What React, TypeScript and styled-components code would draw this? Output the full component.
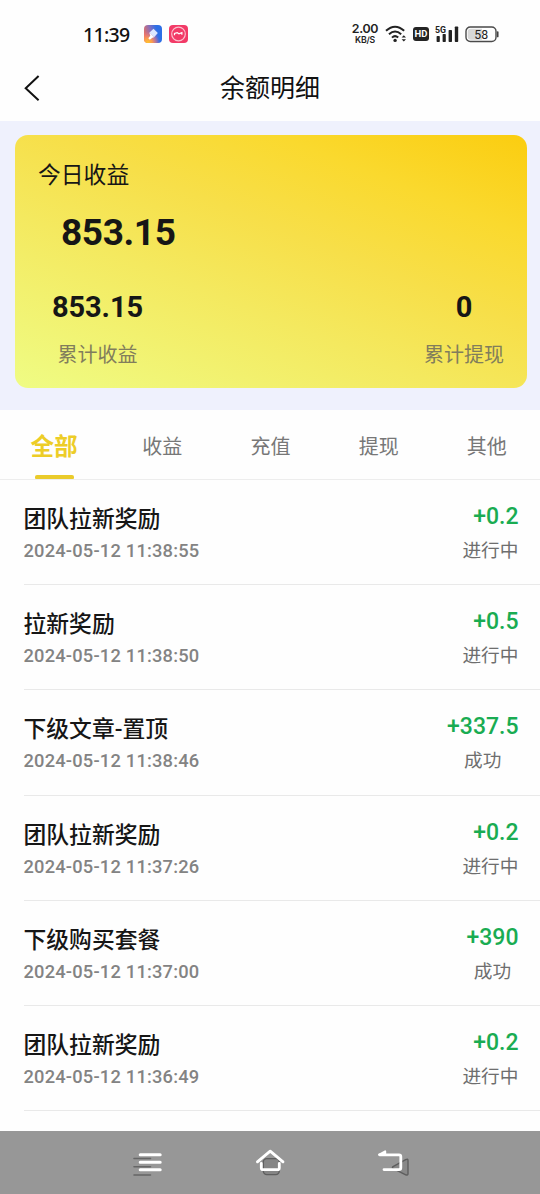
import React from 'react';
import styled, { createGlobalStyle } from 'styled-components';

const GlobalStyle = createGlobalStyle`
  * { box-sizing: border-box; }
  body {
    margin: 0;
    background: #fefefe;
    font-family: Roboto, "Noto Sans CJK SC", sans-serif;
    color: #161616;
  }
`;

const Screen = styled.div`
  width: 540px;
  height: 1194px;
  display: flex;
  flex-direction: column;
  overflow: hidden;
  background: #fefefe;
  white-space: nowrap;
`;

const StatusBar = styled.header`
  height: 56px;
  flex: none;
  display: flex;
  align-items: center;
  justify-content: space-between;
  padding: 12px 40px 0 83px;
`;

const StatusGroup = styled.div<{ $gap: number }>`
  display: flex;
  align-items: center;
  gap: ${(p) => p.$gap}px;
`;

const Clock = styled.span`
  width: 54px;
  padding-top: 1px;
  font: 500 19.5px/24px "Noto Sans", sans-serif;
  letter-spacing: -0.7px;
  color: #111;
`;

const Speed = styled.div`
  width: 28px;
  display: flex;
  flex-direction: column;
  align-items: center;
  font-family: Inter, sans-serif;
  font-weight: 600;
  color: #222;
`;

const SpeedValue = styled.span`
  font-size: 12.4px;
  line-height: 12px;
  letter-spacing: -0.3px;
`;

const SpeedUnit = styled.span`
  font-size: 8.7px;
  line-height: 10px;
  letter-spacing: -0.2px;
`;

const HdBadge = styled.span`
  width: 16px;
  height: 14px;
  border-radius: 3px;
  background: #242424;
  color: #fff;
  font: 700 9.5px/14px Roboto, sans-serif;
  text-align: center;
`;

const TitleBar = styled.div`
  height: 65px;
  flex: none;
  display: grid;
  grid-template-columns: 64px 1fr 64px;
  align-items: center;
`;

const BackButton = styled.button`
  height: 42px;
  padding: 0 0 2px 23px;
  border: 0;
  background: none;
  display: flex;
  align-items: center;
`;

const PageTitle = styled.h1`
  margin: 0;
  padding-top: 1px;
  font-size: 25px;
  line-height: 36px;
  font-weight: 400;
  text-align: center;
  color: #111;
`;

const Hero = styled.section`
  height: 289px;
  flex: none;
  padding: 14px 13px 22px 15px;
  background: #eff1fd;
`;

const BalanceCard = styled.div`
  height: 253px;
  border-radius: 13px;
  background: linear-gradient(22deg, #effc84 0%, #f4e95f 38%, #f7df49 58%, #fad92e 78%, #fbcd10 100%);
  padding: 25px 23px 0;
`;

const CardLabel = styled.div`
  font-size: 22.8px;
  line-height: 32px;
`;

const TodayAmount = styled.div`
  margin-top: 19px;
  padding-left: 23px;
  font-size: 37px;
  line-height: 44px;
  font-weight: 700;
  letter-spacing: -0.4px;
`;

const Totals = styled.div`
  display: flex;
  justify-content: space-between;
  margin-top: 34px;
  padding-left: 14px;
`;

const Total = styled.div`
  display: flex;
  flex-direction: column;
  align-items: center;
`;

const TotalValue = styled.div`
  font-size: 29px;
  line-height: 36px;
  font-weight: 700;
  letter-spacing: -0.1px;
`;

const TotalLabel = styled.div`
  margin-top: 16px;
  font-size: 20px;
  line-height: 28px;
  color: #817d5c;
`;

const Tabs = styled.nav`
  height: 70px;
  flex: none;
  display: grid;
  grid-template-columns: repeat(5, 108.2px);
  border-bottom: 1px solid #ededed;
`;

const Tab = styled.button<{ $active?: boolean }>`
  border: 0;
  padding: 0;
  background: none;
  display: flex;
  flex-direction: column;
  align-items: center;
  font-family: inherit;
  font-size: ${(p) => (p.$active ? 23.6 : 20)}px;
  font-weight: ${(p) => (p.$active ? 700 : 400)};
  line-height: 36px;
  padding-top: 19px;
  color: ${(p) => (p.$active ? '#edcd27' : '#777')};

  &::after {
    content: '';
    width: 39px;
    height: 4px;
    margin-top: 10px;
    border-radius: 2px 2px 1px 1px;
    background: ${(p) => (p.$active ? '#eacb2b' : 'transparent')};
  }
`;

const List = styled.main`
  height: 651px;
  flex: none;
  overflow: hidden;
`;

const Row = styled.article`
  height: 105.2px;
  margin-left: 23.5px;
  padding: 23px 21.5px 0 0;
  display: flex;
  justify-content: space-between;
  border-bottom: 1px solid #e9e9e9;
`;

const RowTitle = styled.div`
  padding-top: 1px;
  font-size: 22.8px;
  line-height: 32px;
  font-weight: 500;
`;

const RowDate = styled.div`
  margin-top: 4px;
  font-size: 18.3px;
  line-height: 22px;
  font-weight: 500;
  letter-spacing: 0.2px;
  color: #838383;
`;

const RowResult = styled.div`
  display: flex;
  flex-direction: column;
`;

const RowAmount = styled.div`
  font-size: 23px;
  line-height: 28px;
  font-weight: 500;
  text-align: right;
  color: #19ac52;
`;

const RowStatus = styled.div`
  margin-top: 6px;
  font-size: 18.7px;
  line-height: 28px;
  text-align: center;
  color: #6e6e6e;
`;

const SystemNav = styled.footer`
  height: 63px;
  flex: none;
  display: flex;
  align-items: center;
  justify-content: space-between;
  padding: 0 130px 3px;
  background: #979797;
`;

const tabs = ['全部', '收益', '充值', '提现', '其他'];

const records = [
  { title: '团队拉新奖励', date: '2024-05-12 11:38:55', amount: '+0.2', status: '进行中' },
  { title: '拉新奖励', date: '2024-05-12 11:38:50', amount: '+0.5', status: '进行中' },
  { title: '下级文章-置顶', date: '2024-05-12 11:38:46', amount: '+337.5', status: '成功' },
  { title: '团队拉新奖励', date: '2024-05-12 11:37:26', amount: '+0.2', status: '进行中' },
  { title: '下级购买套餐', date: '2024-05-12 11:37:00', amount: '+390', status: '成功' },
  { title: '团队拉新奖励', date: '2024-05-12 11:36:49', amount: '+0.2', status: '进行中' },
];

const ThemeAppIcon = () => (
  <svg width="18" height="18" viewBox="0 0 18 18">
    <defs>
      <linearGradient id="themeBase" x1="0" y1="0.6" x2="1" y2="0.3">
        <stop offset="0" stopColor="#f0705c" />
        <stop offset="0.45" stopColor="#7d6fc4" />
        <stop offset="0.75" stopColor="#2d6fe6" />
      </linearGradient>
      <radialGradient id="themeGlow" cx="0.2" cy="1" r="0.65">
        <stop offset="0" stopColor="#ffc928" />
        <stop offset="0.4" stopColor="#fb9a50" />
        <stop offset="1" stopColor="#ef6a90" stopOpacity="0" />
      </radialGradient>
    </defs>
    <rect width="18" height="18" rx="4" fill="url(#themeBase)" />
    <rect width="18" height="18" rx="4" fill="url(#themeGlow)" />
    <path d="M9.5 3.8l4.3 4.3-3.7 4.2-4.8-4.6z" fill="#dbe7ff" />
    <path d="M5.3 7.7l4.8 4.6-1.7.4-2.6 2.1-1.5-1.5 2-2.5z" fill="#fff" />
  </svg>
);

const RedAppIcon = () => (
  <svg width="19" height="18" viewBox="0 0 19 18">
    <rect width="19" height="18" rx="4" fill="#f23a67" />
    <circle cx="9.5" cy="9" r="6.8" fill="none" stroke="#fbc0ce" strokeWidth="1.2" />
    <path d="M5.5 10.2V8.4l2.7-.8 1.7 1.2 3-1.1v2" fill="none" stroke="#fff" strokeWidth="1.2" />
  </svg>
);

const WifiIcon = () => (
  <svg width="22" height="18" viewBox="0 0 22 18" fill="none" stroke="#222" strokeWidth="2">
    <path d="M1 5.8Q10 -2.4 19.2 5.8" />
    <path d="M4 9.3Q10 3.7 16.2 9.3" />
    <path d="M7 12.6Q10 9.7 13.2 12.6" />
    <circle cx="10.1" cy="15.4" r="1.7" fill="#222" stroke="none" />
    <path d="M16.6 12.6l2.2-2.4 2.2 2.4zM16.6 14.2h4.4l-2.2 2.4z" fill="#222" stroke="none" />
  </svg>
);

const SignalIcon = () => (
  <svg width="24" height="18" viewBox="0 0 24 18" fill="#222">
    <text x="0" y="7.5" fontFamily="Roboto, sans-serif" fontWeight="700" fontSize="9.5" textLength="11" lengthAdjust="spacingAndGlyphs">5G</text>
    <rect x="1.6" y="11" width="3.2" height="6" rx=".7" />
    <rect x="7.6" y="9" width="3.2" height="8" rx=".7" />
    <rect x="13.6" y="5" width="3.4" height="12" rx=".7" />
    <rect x="19.8" y="1.5" width="3.4" height="15.5" rx=".7" />
  </svg>
);

const BatteryIcon = () => (
  <svg width="35" height="17" viewBox="0 0 35 17">
    <rect x="1" y="1" width="30" height="14.5" rx="4.3" fill="#fff" stroke="#4a4a4a" strokeWidth="1.4" />
    <path d="M6 2.7H17V13.8H6Q2.7 13.8 2.7 10.8V5.7Q2.7 2.7 6 2.7z" fill="#d8d8d8" />
    <path d="M32.7 6v4.5" stroke="#444" strokeWidth="1.7" strokeLinecap="round" />
    <text x="16.2" y="12.6" textAnchor="middle" fontFamily="Roboto, sans-serif" fontWeight="400" fontSize="12.3" fill="#222">58</text>
  </svg>
);

const BackIcon = () => (
  <svg width="18" height="28" viewBox="0 0 18 28" fill="none" stroke="#111" strokeWidth="2">
    <path d="M15.6 2L2.7 14.3 15.6 26.3" />
  </svg>
);

const MenuIcon = () => (
  <svg width="34" height="30" viewBox="0 0 34 30" fill="none" strokeLinecap="round">
    <path d="M4 12.5H20.5M4 20.8H20.5M4 29H20.5" stroke="#666" strokeWidth="1.6" />
    <path d="M10.2 8.7H30.2M10.2 16.2H30.2M10.2 23.7H30.2" stroke="#fff" strokeWidth="3" />
  </svg>
);

const HomeIcon = () => (
  <svg width="32" height="30" viewBox="0 0 32 30" fill="none" strokeLinecap="round" strokeLinejoin="round">
    <rect x="9.3" y="12.6" width="16" height="16" rx="3.5" fill="#858585" stroke="#5e5e5e" strokeWidth="1.4" />
    <path d="M3.4 15.8L16.2 5.2 29 15.8" stroke="#fff" strokeWidth="2.8" />
    <path d="M7.3 17.5V22Q7.3 23.7 9 23.7H23.6Q25.3 23.7 25.3 22V17.5" stroke="#fff" strokeWidth="2.8" />
  </svg>
);

const ReturnIcon = () => (
  <svg width="34" height="30" viewBox="0 0 34 30" fill="none" strokeLinecap="round" strokeLinejoin="round">
    <path d="M17 20.6Q15.8 21.6 17 22.4L29.7 28.8Q32 29.6 32 27.7V14.5Q32 12.4 29.7 13.7z" fill="#888" stroke="#5e5e5e" strokeWidth="1.4" />
    <path d="M3.6 8.8H23Q24.8 8.8 24.8 10.6V21.8Q24.8 23.6 23 23.6H8" stroke="#fff" strokeWidth="2.8" />
    <path d="M3.2 8.6L9.2 5.4V8.8z" fill="#fff" stroke="#fff" strokeWidth="2" />
  </svg>
);

export default function App() {
  return (
    <Screen>
      <GlobalStyle />
      <StatusBar>
        <StatusGroup $gap={7}>
          <Clock>11:39</Clock>
          <ThemeAppIcon />
          <RedAppIcon />
        </StatusGroup>
        <StatusGroup $gap={6}>
          <Speed>
            <SpeedValue>2.00</SpeedValue>
            <SpeedUnit>KB/S</SpeedUnit>
          </Speed>
          <WifiIcon />
          <HdBadge>HD</HdBadge>
          <SignalIcon />
          <BatteryIcon />
        </StatusGroup>
      </StatusBar>
      <TitleBar>
        <BackButton aria-label="返回"><BackIcon /></BackButton>
        <PageTitle>余额明细</PageTitle>
      </TitleBar>
      <Hero>
        <BalanceCard>
          <CardLabel>今日收益</CardLabel>
          <TodayAmount>853.15</TodayAmount>
          <Totals>
            <Total>
              <TotalValue>853.15</TotalValue>
              <TotalLabel>累计收益</TotalLabel>
            </Total>
            <Total>
              <TotalValue>0</TotalValue>
              <TotalLabel>累计提现</TotalLabel>
            </Total>
          </Totals>
        </BalanceCard>
      </Hero>
      <Tabs>
        {tabs.map((name, i) => (
          <Tab key={name} $active={i === 0}>{name}</Tab>
        ))}
      </Tabs>
      <List>
        {records.map((r) => (
          <Row key={r.date}>
            <div>
              <RowTitle>{r.title}</RowTitle>
              <RowDate>{r.date}</RowDate>
            </div>
            <RowResult>
              <RowAmount>{r.amount}</RowAmount>
              <RowStatus>{r.status}</RowStatus>
            </RowResult>
          </Row>
        ))}
      </List>
      <SystemNav>
        <MenuIcon />
        <HomeIcon />
        <ReturnIcon />
      </SystemNav>
    </Screen>
  );
}
